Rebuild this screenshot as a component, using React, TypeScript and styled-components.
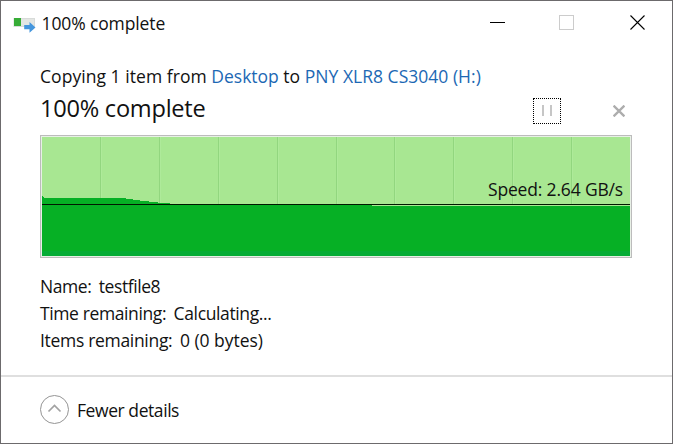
import React from 'react';
import styled, { createGlobalStyle } from 'styled-components';

const GlobalStyle = createGlobalStyle`
  * { box-sizing: border-box; }
  body { margin: 0; background: #fff; }
  svg { display: block; flex: none; }
`;

const Window = styled.main`
  width: 673px;
  height: 444px;
  display: flex;
  flex-direction: column;
  border: 1px solid #6c6a6c;
  background: #fff;
  color: #111;
  font-family: 'Open Sans', 'Noto Sans', sans-serif;
  font-size: 17.5px;
  line-height: 24px;
  overflow: hidden;
`;

const TitleBar = styled.header`
  height: 45px;
  flex: none;
  display: flex;
  align-items: flex-start;
  padding: 0 26px 0 12px;
`;

const Label = styled.span<{ $track?: number }>`
  white-space: pre;
  letter-spacing: ${({ $track = 0 }) => $track}px;
`;

const Title = styled.h1`
  flex: 1;
  margin: 10px 0 0 4.5px;
  font-size: inherit;
  font-weight: 400;
`;

const WindowControls = styled.div`
  display: flex;
  gap: 53px;
  padding-top: 13px;
`;

const PlainButton = styled.button`
  padding: 0;
  border: 0;
  background: none;
  color: inherit;
  font: inherit;
`;

const MaximizeButton = styled(PlainButton)`
  margin-right: 2px;
`;

const AppIconSlot = styled.div`
  padding-top: 16px;
`;

const Content = styled.section`
  height: 329px;
  flex: none;
  display: flex;
  flex-direction: column;
  padding: 18px 40px 0 39px;
`;

const Link = styled.a<{ $track?: number }>`
  color: #1c68b4;
  letter-spacing: ${({ $track = 0 }) => $track}px;
`;

const StatusRow = styled.div`
  height: 47px;
  flex: none;
  display: flex;
  align-items: flex-start;
`;

const Status = styled.h2`
  flex: 1;
  margin: 3px 0 0;
  font-size: 23.6px;
  line-height: 34px;
  font-weight: 400;
`;

const PauseButton = styled(PlainButton)`
  width: 28px;
  height: 26px;
  margin: 10px 52px 0 0;
  border: 1px dotted #000;
`;

const CancelButton = styled(PlainButton)`
  margin: 17px 7px 0 0;
`;

const Chart = styled.div`
  position: relative;
  width: 592px;
  height: 123px;
  flex: none;
  border: 1px solid #bcbcbc;
  padding: 1px;
  background: #e8f0e6;
`;

const Speed = styled.div`
  position: absolute;
  right: 8px;
  top: 41px;
`;

const Details = styled.dl`
  margin: 16px 0 0;
`;

const Detail = styled.div`
  height: 27px;
  display: flex;
  gap: 7.5px;
`;

const Term = styled.dt`
  margin: 0;
`;

const Value = styled.dd`
  margin: 0;
`;

const Footer = styled.footer`
  flex: 1;
  border-top: 2px solid #dfdfdf;
  padding: 18px 39px 0;
`;

const Toggle = styled(PlainButton)`
  display: flex;
  align-items: center;
  gap: 8px;
`;

const ToggleText = styled.span`
  padding-top: 1px;
`;

const gridLines = [1, 2, 3, 4, 5, 6, 7, 8, 9].map((n) => Math.floor(n * 58.8));

const details = [
  { term: 'Name:', value: 'testfile8', termTrack: -0.45, valueTrack: -0.42 },
  { term: 'Time remaining:', value: 'Calculating...', termTrack: -0.39, valueTrack: -0.37 },
  { term: 'Items remaining:', value: '0 (0 bytes)', termTrack: -0.31, valueTrack: -0.02 },
];

function CopyIcon() {
  return (
    <svg width="24" height="17" viewBox="0 0 24 17">
      <rect x="1" y="1.5" width="20.5" height="8" fill="#e3e6e3" stroke="#d8dbd9" />
      <rect x="1" y="1" width="7" height="8" fill="#37ad37" />
      <path d="M11.2 8h5.3V5l6 5.5-6 5.2v-3.5h-5.3z" fill="#4596dd" />
    </svg>
  );
}

function SpeedChart() {
  return (
    <svg width="588" height="119" viewBox="0 0 588 119" shapeRendering="crispEdges">
      <rect width="588" height="119" fill="#a8e792" />
      {gridLines.map((x) => (
        <React.Fragment key={x}>
          <rect x={x} width="1" height="67" fill="#92d67f" />
          <rect x={x + 1} width="1" height="67" fill="#aeea9a" />
        </React.Fragment>
      ))}
      <path d="M0 59h1v1h1v1h82v1h7v1h7v1h9v1h9v1h12v2h202v1h258v50H0z" fill="#06b025" />
      <rect y="114" width="588" height="5" fill="#05ad35" />
      <rect x="0" y="67" width="588" height="1" fill="#001800" />
    </svg>
  );
}

export default function App() {
  return (
    <>
      <GlobalStyle />
      <Window>
        <TitleBar>
          <AppIconSlot>
            <CopyIcon />
          </AppIconSlot>
          <Title>
            <Label $track={-0.12}>100% complete</Label>
          </Title>
          <WindowControls>
            <PlainButton aria-label="Minimize">
              <svg width="16" height="17" viewBox="0 0 16 17">
                <path d="M0 8.5h15" stroke="#000" />
              </svg>
            </PlainButton>
            <MaximizeButton aria-label="Maximize" disabled>
              <svg width="16" height="17" viewBox="0 0 16 17">
                <rect x="0.5" y="1.5" width="14" height="14" fill="none" stroke="#ccc" />
              </svg>
            </MaximizeButton>
            <PlainButton aria-label="Close">
              <svg width="16" height="17" viewBox="0 0 16 17">
                <path d="M.5 1.5l14 14M14.5 1.5l-14 14" stroke="#000" strokeWidth="1.1" />
              </svg>
            </PlainButton>
          </WindowControls>
        </TitleBar>
        <Content>
          <Label $track={0.05}>
            Copying 1 item from <Link $track={-0.02}>Desktop</Link> to <Link $track={0.02}>PNY XLR8 CS3040 (H:)</Link>
          </Label>
          <StatusRow>
            <Status>
              <Label $track={-0.25}>100% complete</Label>
            </Status>
            <PauseButton aria-label="Pause">
              <svg width="26" height="24" viewBox="0 0 26 24">
                <path d="M9 6v11M17 6v11" stroke="#c6c6c6" strokeWidth="2" />
              </svg>
            </PauseButton>
            <CancelButton aria-label="Cancel">
              <svg width="12" height="12" viewBox="0 0 12 12">
                <path d="M.6.6l10.8 10.8M11.4.6L.6 11.4" stroke="#adadad" strokeWidth="2.3" />
              </svg>
            </CancelButton>
          </StatusRow>
          <Chart>
            <SpeedChart />
            <Speed>
              <Label $track={-0.17}>Speed: 2.64 GB/s</Label>
            </Speed>
          </Chart>
          <Details>
            {details.map((d) => (
              <Detail key={d.term}>
                <Term>
                  <Label $track={d.termTrack}>{d.term}</Label>
                </Term>
                <Value>
                  <Label $track={d.valueTrack}>{d.value}</Label>
                </Value>
              </Detail>
            ))}
          </Details>
        </Content>
        <Footer>
          <Toggle>
            <svg width="29" height="29" viewBox="0 0 29 29" fill="none">
              <circle cx="14.5" cy="14.5" r="14" stroke="#949494" />
              <path d="M8.5 16.5l6-6 6 6" stroke="#a2a2a2" strokeWidth="1.7" />
            </svg>
            <ToggleText>
              <Label $track={-0.43}>Fewer details</Label>
            </ToggleText>
          </Toggle>
        </Footer>
      </Window>
    </>
  );
}
